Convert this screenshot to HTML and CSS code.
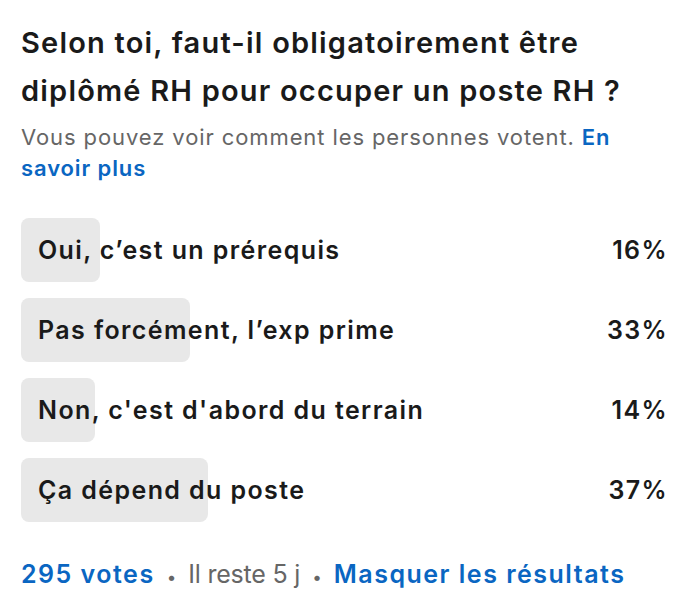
FILE: index.html
```html
<!DOCTYPE html>
<html lang="fr">
<head>
<meta charset="utf-8">
<title>Sondage</title>
<link rel="stylesheet" href="styles.css">
</head>
<body>
<div class="poll">
  <h1 class="question">Selon toi, faut-il obligatoirement être diplômé RH pour occuper un poste RH ?</h1>
  <p class="notice">Vous pouvez voir comment les personnes votent. <a class="link" href="#">En savoir plus</a></p>
  <ul class="options">
    <li class="option">
      <span class="fill" style="width: 79px"></span>
      <span class="label">Oui, c’est un prérequis</span>
      <span class="pct">16%</span>
    </li>
    <li class="option">
      <span class="fill" style="width: 169px"></span>
      <span class="label">Pas forcément, l’exp prime</span>
      <span class="pct">33%</span>
    </li>
    <li class="option">
      <span class="fill" style="width: 74px"></span>
      <span class="label">Non, c'est d'abord du terrain</span>
      <span class="pct">14%</span>
    </li>
    <li class="option">
      <span class="fill" style="width: 187px"></span>
      <span class="label">Ça dépend du poste</span>
      <span class="pct">37%</span>
    </li>
  </ul>
  <div class="footer">
    <a class="link" href="#">295 votes</a>
    <span class="sep">•</span>
    <span class="meta">Il reste 5 j</span>
    <span class="sep">•</span>
    <a class="link" href="#">Masquer les résultats</a>
  </div>
</div>
</body>
</html>
```

FILE: styles.css
```css
* { box-sizing: border-box; }

body {
  margin: 0;
  background: #ffffff;
  font-family: Inter, "Liberation Sans", sans-serif;
  color: #1a1a1a;
}

.poll {
  padding: 19px 25px 0 21px;
  display: flex;
  flex-direction: column;
}

.question {
  margin: 0;
  font-size: 29px;
  font-weight: 600;
  line-height: 48px;
  letter-spacing: 1.2px;
  color: #1a1a1a;
}

.notice {
  margin: 7px 0 0 0;
  font-size: 22px;
  line-height: 31px;
  font-weight: 400;
  letter-spacing: 0.9px;
  color: #666666;
}

.link {
  color: #0a66c2;
  font-weight: 600;
  text-decoration: none;
}

.options {
  list-style: none;
  margin: 34px 0 0 0;
  padding: 0;
  display: flex;
  flex-direction: column;
  gap: 16px;
}

.option {
  position: relative;
  height: 64px;
  display: flex;
  align-items: center;
  justify-content: space-between;
  padding: 0 0 0 17px;
  font-size: 25px;
  font-weight: 600;
  letter-spacing: 1.4px;
  color: #1a1a1a;
}

.fill {
  position: absolute;
  left: 0;
  top: 0;
  bottom: 0;
  background: #e8e8e8;
  border-radius: 8px;
}

.label, .pct {
  position: relative;
}

.pct {
  margin-right: -1px;
}

.footer {
  margin-top: 36px;
  display: flex;
  align-items: baseline;
  gap: 12px;
  font-size: 25px;
  line-height: 32px;
  letter-spacing: 1.5px;
  color: #666666;
}

.meta {
  letter-spacing: -0.2px;
}

.sep {
  font-size: 17px;
  letter-spacing: 0;
}
```
